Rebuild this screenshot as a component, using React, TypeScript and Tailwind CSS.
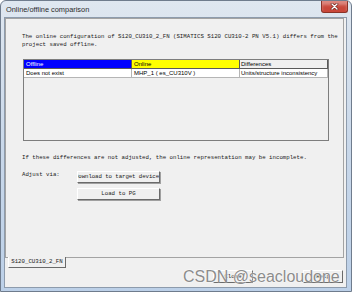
import React from "react";

export default function App() {
  const mono = "[font-family:'Liberation_Mono',monospace] text-[5.72px] leading-[8px] text-[#1a1a1a]";
  return (
    <div className="relative w-[352px] h-[292px] overflow-hidden flex flex-col border border-[#6f7c8d] rounded-t-[6px] bg-gradient-to-b from-[#dfe7f0] via-[#c9d8ea] to-[#bcd0e8]">
      {/* title bar */}
      <div className="h-[16px] flex items-center pl-[5px] shrink-0">
        <span className="[font-family:'Liberation_Sans',Arial,sans-serif] text-[7.4px] leading-none text-[#2a2a2a] mt-[2px]">
          Online/offline comparison
        </span>
      </div>
      <div className="absolute top-0 right-[3px] w-[27px] h-[12px] rounded-b-[3px] border border-t-0 border-[#8a3328] bg-[#c9473a] shadow-[inset_0_4px_3px_rgba(255,255,255,0.35)] flex items-center justify-center">
        <svg width="9" height="7" viewBox="0 0 9 7">
          <path d="M2 1 L7 6 M7 1 L2 6" stroke="#6a1d16" strokeWidth="2.6" strokeLinecap="round" />
          <path d="M2 1 L7 6 M7 1 L2 6" stroke="#ffffff" strokeWidth="1.4" strokeLinecap="round" />
        </svg>
      </div>

      {/* client area */}
      <div className="ml-[3px] mr-[4px] mb-[3px] flex-1 border border-[#8d9bac] bg-[#f0f0f0] flex flex-col">
        {/* tab page panel */}
        <div className="w-[339px] h-[240px] border border-[#a3a3a3] bg-[#f0f0f0] flex flex-col">
          <div className={`${mono} mt-[14px] ml-[16px] whitespace-nowrap`}>
            <div>The online configuration of S120_CU310_2_FN (SIMATICS S120 CU310-2 PN V5.1) differs from the</div>
            <div>project saved offline.</div>
          </div>

          {/* table */}
          <div className="mt-[10px] ml-[17px] w-[306px] h-[82px] border border-[#7d7d7d] bg-[#f0f0f0] flex flex-col [font-family:'Liberation_Sans',Arial,sans-serif] text-[6px] leading-[8px]">
            <div className="flex h-[9px]">
              <div className="w-[108px] bg-[#0000ff] text-white pl-[2px] border-r border-b border-[#5a5a5a]">Offline</div>
              <div className="w-[108px] bg-[#ffff00] text-black pl-[2px] border-r border-b border-[#5a5a5a]">Online</div>
              <div className="w-[88px] bg-[#f0f0f0] text-black pl-[1px] border-r border-b border-[#5a5a5a]">Differences</div>
            </div>
            <div className="flex h-[9px] bg-white w-[304px]">
              <div className="w-[108px] pl-[2px] border-r border-b border-[#b5b5b5] text-black">Does not exist</div>
              <div className="w-[108px] pl-[2px] border-r border-b border-[#b5b5b5] text-black">MHP_1 ( es_CU310V )</div>
              <div className="w-[88px] pl-[1px] border-r border-b border-[#b5b5b5] text-black">Units/structure inconsistency</div>
            </div>
          </div>

          <div className={`${mono} mt-[13px] ml-[16px] whitespace-nowrap`}>
            If these differences are not adjusted, the online representation may be incomplete.
          </div>

          <div className="mt-[9px] ml-[16px] flex">
            <div className={`${mono} w-[55px]`}>Adjust via:</div>
            <div className="flex flex-col gap-[5px]">
              <div className={`${mono} tracking-[-0.07px] w-[83px] h-[12px] flex items-center justify-end overflow-hidden whitespace-nowrap border border-t-white border-l-white border-r-[#6a6a6a] border-b-[#6a6a6a] shadow-[1px_1px_0_#a0a0a0] bg-[#f0f0f0]`}>
                Download to target device
              </div>
              <div className={`${mono} w-[83px] h-[12px] flex items-center justify-center overflow-hidden whitespace-nowrap border border-t-white border-l-white border-r-[#6a6a6a] border-b-[#6a6a6a] shadow-[1px_1px_0_#a0a0a0] bg-[#f0f0f0]`}>
                Load to PG
              </div>
            </div>
          </div>
        </div>

        {/* bottom: tab + buttons */}
        <div className="flex flex-1">
          <div className={`${mono} -mt-[1px] ml-[3px] w-[58px] h-[11px] flex items-center justify-center bg-[#f0f0f0] border-l border-l-white border-r border-r-[#6a6a6a] border-b border-b-[#6a6a6a] whitespace-nowrap`}>
            S120_CU310_2_FN
          </div>
          <div className="ml-auto mr-[3px] mt-[12px] flex gap-[50px] self-start">
            <div className={`${mono} w-[40px] h-[13px] flex items-center justify-center border border-t-white border-l-white border-r-[#6a6a6a] border-b-[#6a6a6a]`}>Close</div>
            <div className={`${mono} w-[40px] h-[13px] flex items-center justify-center border border-t-white border-l-white border-r-[#6a6a6a] border-b-[#6a6a6a]`}>Help</div>
          </div>
        </div>
      </div>

      {/* watermark */}
      <div className="absolute left-[182px] top-[268px] [font-family:'Liberation_Sans',Arial,sans-serif] text-[16px] leading-[16px] text-[#8c8c8c] whitespace-nowrap [text-shadow:0_0_1px_#ffffff,0_0_2px_#ffffff]">
        CSDN @seacloudone
      </div>
    </div>
  );
}
